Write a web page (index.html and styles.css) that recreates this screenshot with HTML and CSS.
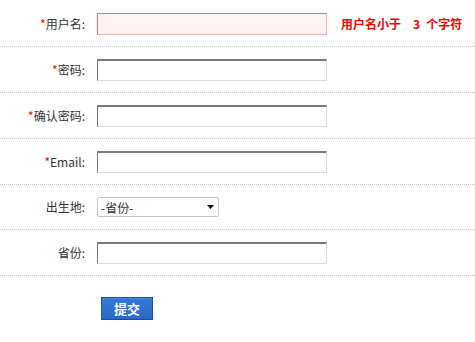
FILE: index.html
```html
<!DOCTYPE html>
<html lang="zh">
<head>
<meta charset="utf-8">
<title>注册</title>
<link rel="stylesheet" href="styles.css">
</head>
<body>
<form class="reg-form">
  <div class="row">
    <label class="label"><span class="req">*</span>用户名:</label>
    <div class="field">
      <input class="text error" type="text">
      <span class="msg">用户名小于&nbsp; 3 个字符</span>
    </div>
  </div>
  <div class="row">
    <label class="label"><span class="req">*</span>密码:</label>
    <div class="field"><input class="text" type="password"></div>
  </div>
  <div class="row">
    <label class="label"><span class="req">*</span>确认密码:</label>
    <div class="field"><input class="text" type="password"></div>
  </div>
  <div class="row">
    <label class="label"><span class="req">*</span>Email:</label>
    <div class="field"><input class="text" type="text"></div>
  </div>
  <div class="row row-select">
    <label class="label">出生地:</label>
    <div class="field">
      <div class="select-wrap">
        <select class="select"><option>-省份-</option></select>
        <svg class="arrow" width="7" height="4" viewBox="0 0 7 4"><path d="M0 0H7L3.5 4Z" fill="#000"/></svg>
      </div>
    </div>
  </div>
  <div class="row">
    <label class="label">省份:</label>
    <div class="field"><input class="text" type="text"></div>
  </div>
  <div class="actions">
    <button class="submit" type="button">提交</button>
  </div>
</form>
</body>
</html>
```
FILE: styles.css
```css
* { box-sizing: border-box; }
html, body { margin: 0; padding: 0; background: #fff; }
body {
  font-family: "Noto Sans CJK SC", "Liberation Sans", sans-serif;
  font-size: 12px;
  color: #333;
}
.reg-form { padding-top: 1px; }
.row {
  display: flex;
  align-items: center;
  height: 46px;
  border-bottom: 1px dotted #c8c8c8;
}
.row-select { height: 45px; }
.label {
  width: 86px;
  text-align: right;
  padding-right: 1px;
  line-height: 16px;
  color: #333;
}
.req { color: #f00; }
.field {
  margin-left: 11px;
  display: flex;
  align-items: center;
}
.text {
  width: 230px;
  height: 22px;
  margin: 0;
  padding: 0 3px;
  font: inherit;
  border: 1px solid;
  border-color: #7a7a7a #dcdcdc #dcdcdc #7a7a7a;
  border-top-width: 2px;
  background: #fff;
  outline: none;
}
.text.error {
  border-color: #ff6b6b #ffb4b4 #ffb4b4 #ff6b6b;
  border-top-width: 1px;
  background: #fff3f3;
}
.msg {
  margin-left: 14px;
  color: #f00;
  font-weight: bold;
  font-size: 12px;
  word-spacing: 3.3px;
  white-space: nowrap;
}
.select-wrap {
  position: relative;
  width: 122px;
  height: 20px;
}
.select {
  -webkit-appearance: none;
  appearance: none;
  width: 122px;
  height: 20px;
  margin: 0;
  padding: 0 0 0 3px;
  font: inherit;
  color: #333;
  border: 1px solid #c6c6c6;
  border-radius: 2px;
  background: #fff;
  outline: none;
}
.arrow {
  position: absolute;
  right: 5px;
  top: 8px;
  pointer-events: none;
}
.actions {
  padding: 21px 0 0 101px;
}
.submit {
  width: 52px;
  height: 23px;
  margin: 0;
  padding: 0;
  border: 1px solid #1b4f9c;
  background: linear-gradient(#4a8ae0 0, #3478d6 2px, #2a68c4 100%);
  color: #fff;
  font-family: inherit;
  font-size: 13px;
  font-weight: bold;
  line-height: 21px;
  cursor: pointer;
}
```
